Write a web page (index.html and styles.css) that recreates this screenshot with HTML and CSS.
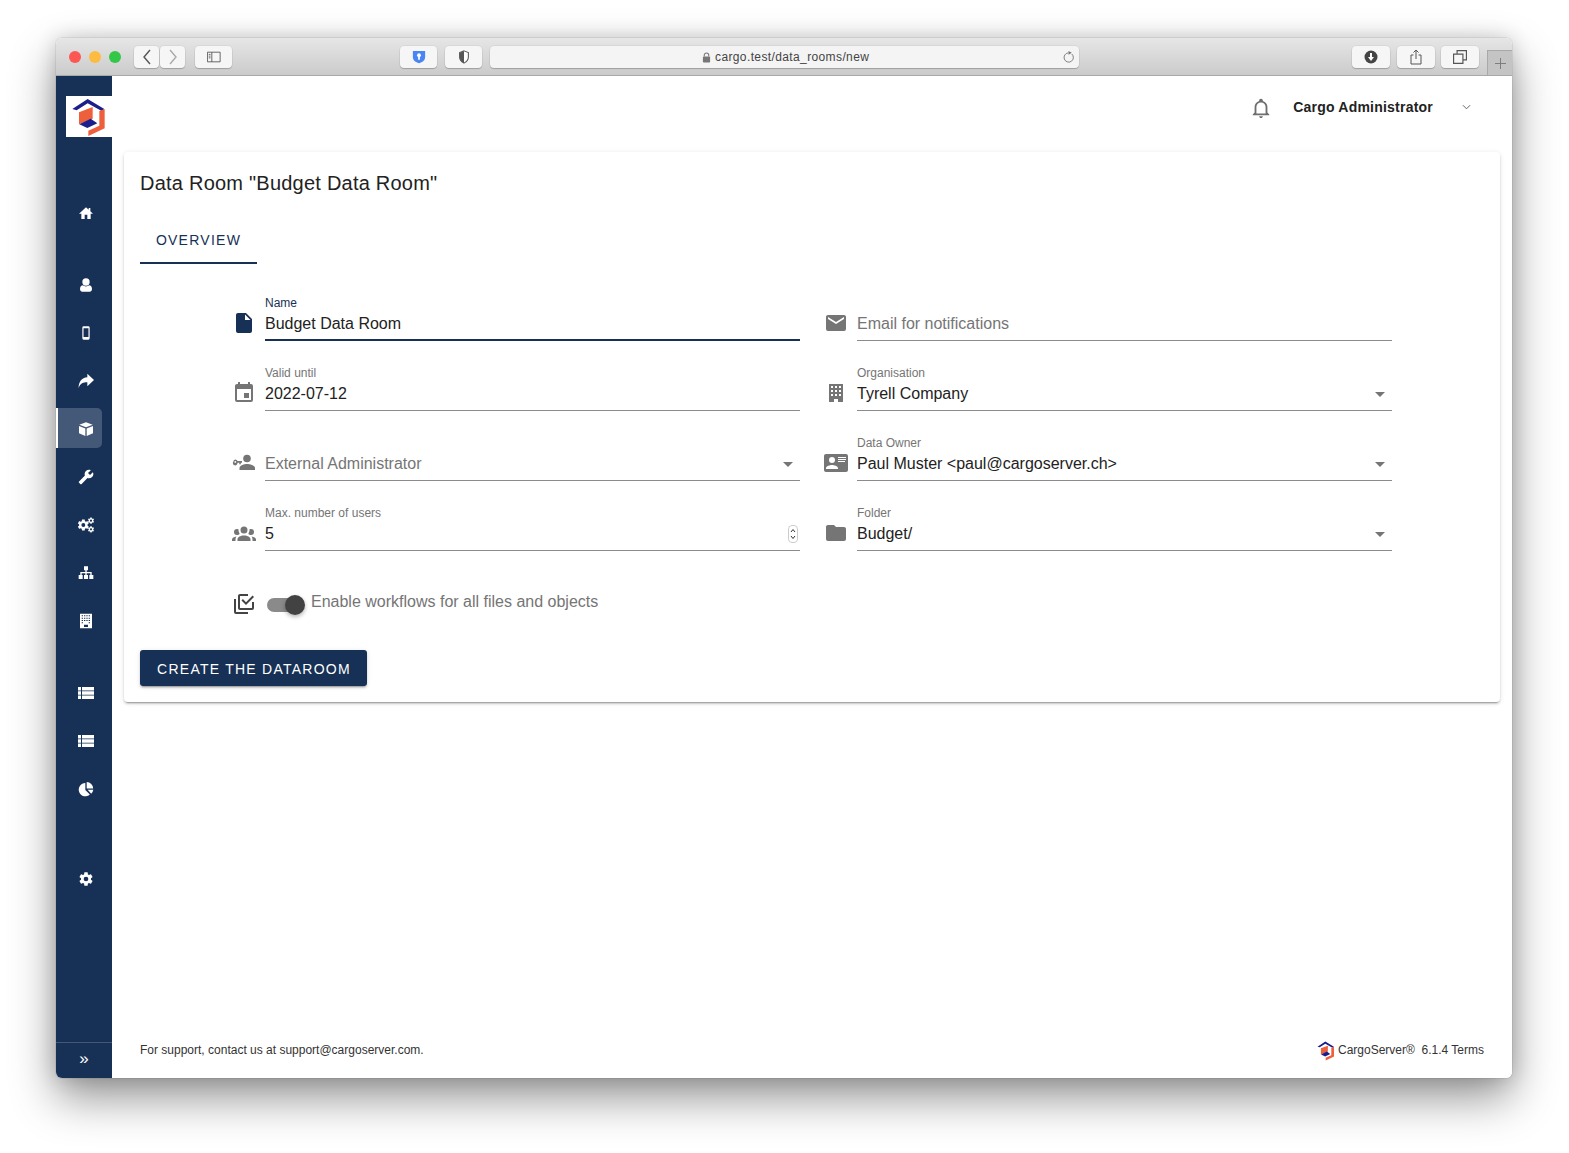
FILE: index.html
```html
<!DOCTYPE html>
<html lang="en">
<head>
<meta charset="utf-8">
<title>Data Room</title>
<link rel="stylesheet" href="styles.css">
</head>
<body>
<svg class="defs" width="0" height="0" aria-hidden="true">
  <symbol id="logo" viewBox="48 198 138 123">
    <polygon fill="#1a1f8c" points="113,207 163,237 155,243 113,220 80,241 67,237"/>
    <polygon fill="#ee5f3b" points="87,247 128,231 128,266 87,283"/>
    <polygon fill="#1a1f8c" points="88,283 122,266 142,280 112,294"/>
    <polygon fill="#ee5f3b" points="148,243 164,237 164,295 115,318 115,302 148,287"/>
  </symbol>
  <symbol id="i-cog" viewBox="0 0 24 24"><path d="M12,15.5A3.5,3.5 0 0,1 8.5,12A3.5,3.5 0 0,1 12,8.5A3.5,3.5 0 0,1 15.5,12A3.5,3.5 0 0,1 12,15.5M19.43,12.97C19.47,12.65 19.5,12.33 19.5,12C19.5,11.67 19.47,11.34 19.43,11L21.54,9.37C21.73,9.22 21.78,8.95 21.66,8.73L19.66,5.27C19.54,5.05 19.27,4.96 19.05,5.05L16.56,6.05C16.04,5.66 15.5,5.32 14.87,5.07L14.5,2.42C14.46,2.18 14.25,2 14,2H10C9.75,2 9.54,2.18 9.5,2.42L9.13,5.07C8.5,5.32 7.96,5.66 7.44,6.05L4.95,5.05C4.73,4.96 4.46,5.05 4.34,5.27L2.34,8.73C2.21,8.95 2.27,9.22 2.46,9.37L4.57,11C4.53,11.34 4.5,11.67 4.5,12C4.5,12.33 4.53,12.65 4.57,12.97L2.46,14.63C2.27,14.78 2.21,15.05 2.34,15.27L4.34,18.73C4.46,18.95 4.73,19.03 4.95,18.95L7.44,17.94C7.96,18.34 8.5,18.68 9.13,18.93L9.5,21.58C9.54,21.82 9.75,22 10,22H14C14.25,22 14.46,21.82 14.5,21.58L14.87,18.93C15.5,18.67 16.04,18.34 16.56,17.94L19.05,18.95C19.27,19.03 19.54,18.95 19.66,18.73L21.66,15.27C21.78,15.05 21.73,14.78 21.54,14.63L19.43,12.97Z"/></symbol>
  <symbol id="i-list" viewBox="0 0 16 12"><path d="M0 0h3v3.400H0zM4 0h12v3.400H4zM0 4.300h3v3.400H0zM4 4.300h12v3.400H4zM0 8.600h3V12H0zM4 8.600h12V12H4z"/></symbol>
</svg>

<div class="window">
  <header class="toolbar">
    <span class="light red"></span><span class="light amber"></span><span class="light green"></span>
    <span class="tbtn back"><svg viewBox="0 0 12 18" class="nav-ic"><path d="M9 2L3 9l6 7" fill="none" stroke="#555" stroke-width="1.4"/></svg></span>
    <span class="tbtn fwd"><svg viewBox="0 0 12 18" class="nav-ic"><path d="M3 2l6 7-6 7" fill="none" stroke="#aaa" stroke-width="1.4"/></svg></span>
    <span class="tbtn wide sidebar-btn"><svg viewBox="0 0 16 12" class="tb-ic"><path d="M.5.5h14.5v11H.5zM5.5.5v11M2 3h2M2 5h2M2 7h2" fill="none" stroke="#555"/></svg></span>
    <span class="tbtn wide bw-btn"><svg viewBox="0 0 16 16" class="tb-ic"><path d="M1 1h14v7c0 4-3 6-7 7-4-1-7-3-7-7z" fill="#4a85f6"/><circle cx="8" cy="6" r="2.2" fill="#fff"/><path d="M7 7h2v4H7z" fill="#fff"/></svg></span>
    <span class="tbtn wide gap8"><svg viewBox="0 0 16 16" class="tb-ic"><path d="M8 1l5 2v5c0 3-2 5.500-5 7-3-1.500-5-4-5-7V3z" fill="#fff" stroke="#555" stroke-width="1.200"/><path d="M8 1L3 3v5c0 3 2 5.500 5 7z" fill="#555"/></svg></span>
    <div class="urlbar">
      <svg viewBox="0 0 10 12" class="lock"><path d="M2.500 5V3.500a2.500 2.500 0 015 0V5" fill="none" stroke="#777" stroke-width="1.200"/><rect x="1" y="5" width="8" height="6.500" rx="1" fill="#777"/></svg>
      <span class="url">cargo.test/data_rooms/new</span>
      <svg viewBox="0 0 14 14" class="reload"><path d="M10.500 3.200A5 5 0 116.800 2" fill="none" stroke="#777" stroke-width="1"/><path d="M7 0l3.500 2L7 4z" fill="#777"/></svg>
    </div>
    <span class="tbtn wide dl-btn"><svg viewBox="0 0 14 14" class="tb-ic"><circle cx="7" cy="7" r="6.500" fill="#444"/><path d="M6 3h2v4h2L7 11 4 7h2z" fill="#fff"/></svg></span>
    <span class="tbtn wide gap7"><svg viewBox="0 0 12 16" class="tb-ic tall"><path d="M3.500 6H1v9h10V6H8.500M6 10V1M3.500 3.500L6 1l2.500 2.500" fill="none" stroke="#555"/></svg></span>
    <span class="tbtn wide gap6"><svg viewBox="0 0 12 12" class="tb-ic"><path d="M.5 3.500h8v8h-8zM3.500 3.500v-3h8v8h-3" fill="none" stroke="#555"/></svg></span>
    <span class="newtab"><svg viewBox="0 0 12 12" class="plus"><path d="M6 0v12M0 6h12" stroke="#777" fill="none"/></svg></span>
  </header>

  <div class="app">
    <aside class="sidenav">
      <div class="logo"><svg class="logo-svg"><use href="#logo"/></svg></div>
      <nav class="navgroup">
        <a class="navitem"><svg viewBox="0 0 24 24" class="nav"><path d="M10,21V14.500H14V21H19V13H22.500L18.500 9.300V4.500H16V7L12,3.200L1.500,13H5V21H10Z"/></svg></a>
      </nav>
      <nav class="navgroup">
        <a class="navitem"><svg viewBox="0 0 24 24" class="nav"><circle cx="12" cy="7.500" r="5.500"/><path d="M3 18c0-4 2.500-5.500 4.500-5.500 1 1 2.700 1.800 4.500 1.800s3.500-.8 4.500-1.800c2 0 4.500 1.500 4.500 5.500 0 2.500-1.500 4-3.500 4h-11C4.500 22 3 20.500 3 18z"/></svg></a>
        <a class="navitem"><svg viewBox="0 0 24 24" class="nav"><path fill-rule="evenodd" d="M8.500 2h7A2 2 0 0117.500 4v16a2 2 0 01-2 2h-7a2 2 0 01-2-2V4a2 2 0 012-2zM8.300 5v13h7.400V5z"/></svg></a>
        <a class="navitem"><svg viewBox="0 0 24 24" class="nav"><path d="M14,6.500V1L24,10.500L14,20V14C8,14 3.500,15.500 1,22.500C.5,14 5.500,7 14,6.500Z"/></svg></a>
        <a class="navitem active"><svg viewBox="0 0 24 24" class="nav"><path d="M12 2l10 3.600L12 9.500 2 5.600z"/><path d="M1.500 7.500l9.500 3.700V22.500l-9.500-4z"/><path d="M22.500 7.500L13 11.200V22.500l9.500-4z"/></svg></a>
        <a class="navitem"><svg viewBox="0 0 24 24" class="nav"><g transform="translate(24,0) scale(-1,1)"><path d="M22.700,19L13.600,9.900C14.500,7.600 14,4.900 12.100,3C10.100,1 7.100,.6 4.700,1.700L9,6L6,9L1.600,4.700C.4,7.100 .9,10.100 2.900,12.100C4.800,14 7.500,14.500 9.800,13.600L18.900,22.700C19.300,23.100 19.900,23.100 20.300,22.700L22.600,20.400C23.100,20 23.100,19.300 22.700,19Z"/></g></svg></a>
        <a class="navitem"><svg viewBox="0 0 24 24" class="nav"><svg x="-2" y="2" width="20" height="20" viewBox="0 0 24 24"><use href="#i-cog"/></svg><svg x="14" y="0" width="11" height="11" viewBox="0 0 24 24"><use href="#i-cog"/></svg><svg x="14" y="13" width="11" height="11" viewBox="0 0 24 24"><use href="#i-cog"/></svg></svg></a>
        <a class="navitem"><svg viewBox="0 0 24 24" class="nav"><path d="M9 2h6v6h-2v2.500h7.500V15H23v6h-6v-6h1.500v-2.500H13V15h2v6H9v-6h2v-2.500H5.500V15H7v6H1v-6h2.500v-4.500H11V8H9z"/></svg></a>
        <a class="navitem"><svg viewBox="0 0 24 24" class="nav"><path fill-rule="evenodd" d="M3 1h18v22H3zM5.500 3.500v1.500h2V3.500zM9 3.500v1.500h2V3.500zM12.500 3.500v1.500h2V3.500zM16 3.500v1.500h2V3.500zM5.500 7v1.500h2V7zM9 7v1.500h2V7zM12.500 7v1.500h2V7zM16 7v1.500h2V7zM5.500 10.500V12h2v-1.500zM9 10.500V12h2v-1.500zM12.500 10.500V12h2v-1.500zM16 10.500V12h2v-1.500zM5.500 14v1.500h2V14zM16 14v1.500h2V14zM9 17.500V21h6v-3.500z"/></svg></a>
      </nav>
      <nav class="navgroup">
        <a class="navitem"><svg class="nav listic"><use href="#i-list"/></svg></a>
        <a class="navitem"><svg class="nav listic"><use href="#i-list"/></svg></a>
        <a class="navitem"><svg viewBox="0 0 24 24" class="nav"><path d="M11 3a10 10 0 106.800 17.400L11 13.500z"/><path d="M13 1.500a10 10 0 019.800 9.800H13z"/><path d="M14.500 13.300h8.500a10 10 0 01-3.300 6z"/></svg></a>
      </nav>
      <nav class="navgroup settings">
        <a class="navitem"><svg class="nav"><use href="#i-cog"/></svg></a>
      </nav>
      <div class="collapse">»</div>
    </aside>

    <main class="main">
      <div class="topbar">
        <svg viewBox="0 0 24 24" class="bell"><path d="M10 21H14C14 22.100 13.100 23 12 23S10 22.100 10 21M21 19V20H3V19L5 17V11C5 7.900 7 5.200 10 4.300V4C10 2.900 10.900 2 12 2S14 2.900 14 4V4.300C17 5.200 19 7.900 19 11V17L21 19M17 11C17 8.200 14.800 6 12 6S7 8.200 7 11V18H17V11Z"/></svg>
        <span class="username">Cargo Administrator</span>
        <svg viewBox="0 0 10 6" class="caret"><path d="M1 1l4 4 4-4" fill="none" stroke="#555" stroke-width="1"/></svg>
      </div>

      <section class="card">
        <h1 class="title">Data Room "Budget Data Room"</h1>
        <div class="tabs"><span class="tab">OVERVIEW</span></div>

        <form class="form">
          <div class="cell">
            <svg viewBox="0 0 24 24" class="ficon navy"><path d="M13,9V3.500L18.500,9M6,2C4.890,2 4,2.890 4,4V20A2,2 0 0,0 6,22H18A2,2 0 0,0 20,20V8L14,2H6Z"/></svg>
            <div class="field focused"><label class="lbl">Name</label><div class="val"><span>Budget Data Room</span></div></div>
          </div>
          <div class="cell">
            <svg viewBox="0 0 24 24" class="ficon"><path d="M20,8L12,13L4,8V6L12,11L20,6M20,4H4C2.890,4 2,4.890 2,6V18A2,2 0 0,0 4,20H20A2,2 0 0,0 22,18V6C22,4.890 21.100,4 20,4Z"/></svg>
            <div class="field"><label class="lbl"></label><div class="val ph"><span>Email for notifications</span></div></div>
          </div>
          <div class="cell">
            <svg viewBox="0 0 24 24" class="ficon"><path d="M19 3h-1V1h-2v2H8V1H6v2H5c-1.110 0-2 .9-2 2v14a2 2 0 002 2h14a2 2 0 002-2V5a2 2 0 00-2-2zm0 16H5V8h14v11zM12 12h5v5h-5z"/></svg>
            <div class="field"><label class="lbl">Valid until</label><div class="val"><span>2022-07-12</span></div></div>
          </div>
          <div class="cell">
            <svg viewBox="0 0 24 24" class="ficon"><path fill-rule="evenodd" d="M5 3h14v18h-5v-3h-4v3H5zM7 5v2h2V5zM11 5v2h2V5zM15 5v2h2V5zM7 9v2h2V9zM11 9v2h2V9zM15 9v2h2V9zM7 13v2h2v-2zM11 13v2h2v-2zM15 13v2h2v-2z"/></svg>
            <div class="field"><label class="lbl">Organisation</label><div class="val"><span>Tyrell Company</span><i class="arrow"></i></div></div>
          </div>
          <div class="cell">
            <svg viewBox="0 0 24 24" class="ficon"><circle cx="15" cy="7.500" r="3.800"/><path d="M7.500 19v-2c0-2.600 5-4 7.500-4s8 1.400 8 4v2z"/><path fill-rule="evenodd" d="M3.300 8.500a2.300 2.300 0 012.200 1.500H10v1.800H8.800v1.500H7.300v-1.500H5.500A2.300 2.300 0 111.300 10.800a2.300 2.300 0 012-2.300zm0 1.500a.9.9 0 100 1.800.9.9 0 000-1.800z"/></svg>
            <div class="field"><label class="lbl"></label><div class="val ph"><span>External Administrator</span><i class="arrow"></i></div></div>
          </div>
          <div class="cell">
            <svg viewBox="0 0 24 24" class="ficon"><path d="M2,3H22C23.050,3 24,3.950 24,5V19C24,20.050 23.050,21 22,21H2C.95,21 0,20.050 0,19V5C0,3.950 .95,3 2,3M14,6V7H22V6H14M14,8V9H21.500L22,9V8H14M14,10V11H21V10H14M8,13.910C6,13.910 2,15 2,17V18H14V17C14,15 10,13.910 8,13.910M8,6A3,3 0 0,0 5,9A3,3 0 0,0 8,12A3,3 0 0,0 11,9A3,3 0 0,0 8,6Z"/></svg>
            <div class="field"><label class="lbl">Data Owner</label><div class="val"><span>Paul Muster &lt;paul@cargoserver.ch&gt;</span><i class="arrow"></i></div></div>
          </div>
          <div class="cell">
            <svg viewBox="0 0 24 24" class="ficon"><path d="M12,5.500A3.500,3.500 0 0,1 15.500,9A3.500,3.500 0 0,1 12,12.500A3.500,3.500 0 0,1 8.500,9A3.500,3.500 0 0,1 12,5.500M5,8C5.560,8 6.080,8.150 6.530,8.420C6.380,9.850 6.800,11.270 7.660,12.380C7.160,13.340 6.160,14 5,14A3,3 0 0,1 2,11A3,3 0 0,1 5,8M19,8A3,3 0 0,1 22,11A3,3 0 0,1 19,14C17.840,14 16.840,13.340 16.340,12.380C17.200,11.270 17.620,9.850 17.470,8.420C17.920,8.150 18.440,8 19,8M5.500,18.250C5.500,16.180 8.410,14.500 12,14.500C15.590,14.500 18.500,16.180 18.500,18.250V20H5.500V18.250M0,20V18.500C0,17.110 1.890,15.940 4.450,15.600C3.860,16.280 3.500,17.220 3.500,18.250V20H0M24,20H20.500V18.250C20.500,17.220 20.140,16.280 19.550,15.600C22.110,15.940 24,17.110 24,18.500V20Z"/></svg>
            <div class="field"><label class="lbl">Max. number of users</label><div class="val"><span>5</span><svg viewBox="0 0 10 18" class="spin"><rect x=".5" y=".5" width="9" height="17" rx="3.500" fill="#fff" stroke="#ccc"/><path d="M3 7l2-2.500L7 7M3 11l2 2.500L7 11" fill="none" stroke="#333"/></svg></div></div>
          </div>
          <div class="cell">
            <svg viewBox="0 0 24 24" class="ficon"><path d="M10,4H4C2.890,4 2,4.890 2,6V18A2,2 0 0,0 4,20H20A2,2 0 0,0 22,18V8C22,6.890 21.100,6 20,6H12L10,4Z"/></svg>
            <div class="field"><label class="lbl">Folder</label><div class="val"><span>Budget/</span><i class="arrow"></i></div></div>
          </div>
        </form>

        <div class="toggle-row">
          <svg viewBox="0 0 24 24" class="ficon dark"><path d="M20,16V10H22V16A2,2 0 0,1 20,18H8C6.890,18 6,17.100 6,16V4C6,2.890 6.890,2 8,2H16V4H8V16H20M10.910,7.080L14,10.170L20.590,3.580L22,5L14,13L9.500,8.500L10.910,7.080M16,20V22H4A2,2 0 0,1 2,20V7H4V20H16Z"/></svg>
          <span class="switch"><span class="thumb"></span></span>
          <span class="toggle-label">Enable workflows for all files and objects</span>
        </div>

        <button type="button" class="primary">CREATE THE DATAROOM</button>
      </section>

      <footer class="footer">
        <span>For support, contact us at support@cargoserver.com.</span>
        <span class="brand"><svg class="mini"><use href="#logo"/></svg>CargoServer®&nbsp; 6.1.4 Terms</span>
      </footer>
    </main>
  </div>
</div>
</body>
</html>
```
FILE: styles.css
```css
* { box-sizing: border-box; }
html, body { margin: 0; height: 100%; background: #fff; overflow: hidden; }
body { font-family: "Liberation Sans", Arial, sans-serif; color: #222; padding-top: 38px; }
.defs { position: absolute; }

.window {
  margin: 0 57px 0 56px; height: 1040px; display: flex; flex-direction: column;
  border-radius: 6px; overflow: hidden;
  box-shadow: 0 0 0 1px rgba(0,0,0,.06), 0 20px 45px rgba(0,0,0,.42), 0 0 20px rgba(0,0,0,.16);
}

.toolbar {
  height: 38px; flex: none; display: flex; align-items: flex-start; padding: 8px 0 0 13px;
  background: linear-gradient(#e6e6e6, #cbcbcb); border-bottom: 1px solid #a9a9a9;
}
.light { width: 12px; height: 12px; border-radius: 50%; margin: 5px 8px 0 0; }
.red { background: #fc5753; }
.amber { background: #fdbc40; }
.green { background: #33c748; margin-right: 0; }
.tbtn {
  height: 22px; background: #f6f6f6; border-radius: 4px; display: flex; align-items: center; justify-content: center;
  box-shadow: 0 1px 1px rgba(0,0,0,.2), 0 0 0 .5px rgba(0,0,0,.08);
}
.back { width: 25px; margin-left: 13px; }
.fwd { width: 25px; margin-left: 1px; }
.wide { width: 37px; }
.sidebar-btn { margin-left: 10px; }
.bw-btn { margin-left: 168px; }
.gap8 { margin-left: 8px; }
.dl-btn { margin-left: 273px; width: 38px; }
.gap7 { margin-left: 7px; width: 38px; }
.gap6 { margin-left: 6px; width: 38px; }
.nav-ic { width: 12px; height: 18px; }
.tb-ic { width: 14px; height: 14px; }
.tall { height: 16px; }
.urlbar {
  width: 589px; height: 22px; margin-left: 8px; background: #f4f4f4; border-radius: 4px;
  box-shadow: 0 1px 1px rgba(0,0,0,.2), 0 0 0 .5px rgba(0,0,0,.08);
  display: flex; align-items: center; padding-left: 212px; font-size: 12px; color: #444;
}
.lock { width: 9px; height: 11px; margin-right: 4px; }
.url { letter-spacing: .38px; }
.reload { width: 13px; height: 13px; margin-left: auto; margin-right: 4px; }
.newtab {
  width: 25px; height: 25px; margin: 4px 0 0 8px; background: #c4c4c4;
  border-left: 1px solid #a9a9a9; border-top: 1px solid #a9a9a9;
  display: flex; align-items: center; justify-content: center;
}
.plus { width: 11px; height: 11px; }

.app { flex: 1; display: flex; min-height: 0; }

.sidenav { width: 56px; flex: none; background: #163056; display: flex; flex-direction: column; padding-top: 20px; }
.logo { height: 41px; margin: 0 0 55px 10px; background: #fff; flex: none; }
.logo-svg { width: 46px; height: 41px; display: block; }
.navgroup { display: flex; flex-direction: column; gap: 8px; margin-bottom: 32px; }
.settings { margin-top: 18px; }
.navitem {
  height: 40px; width: 46px; display: flex; align-items: center; padding: 2px 0 0 20px;
  border-left: 2px solid transparent; border-radius: 0 5px 5px 0;
}
.navitem.active { background: rgba(255,255,255,.2); border-left-color: #fff; }
.nav { width: 16px; height: 16px; fill: #fff; display: block; overflow: visible; }
.listic { height: 12px; }
.collapse {
  margin-top: auto; height: 36px; border-top: 1px solid rgba(255,255,255,.2); color: #fff;
  font-size: 17px; line-height: 32px; text-align: center;
}

.main { flex: 1; display: flex; flex-direction: column; background: #fff; min-width: 0; }
.topbar { height: 76px; flex: none; display: flex; align-items: center; padding: 0 41px 14px 0; justify-content: flex-end; }
.bell { width: 22px; height: 22px; fill: #6e6e6e; margin: 2px 21px 0 0; }
.username { font-size: 14px; font-weight: 700; letter-spacing: .22px; color: #222; margin-right: 29px; }
.caret { width: 9px; height: 6px; }

.card {
  margin: 0 12px; padding: 16px; background: #fff; border-radius: 4px;
  box-shadow: 0 3px 1px -2px rgba(0,0,0,.2), 0 2px 2px 0 rgba(0,0,0,.14), 0 1px 5px 0 rgba(0,0,0,.12);
}
.title { margin: 0; font-size: 20px; font-weight: 400; line-height: 30px; letter-spacing: .23px; color: #222; }
.tabs { margin-top: 18px; display: flex; }
.tab {
  height: 48px; width: 117px; display: flex; align-items: center; justify-content: center; padding-top: 1px;
  font-size: 14px; letter-spacing: 1.25px; color: #163056; border-bottom: 2px solid #163056;
}

.form { margin: 31px 108px 0 92px; display: grid; grid-template-columns: 568px 568px; column-gap: 24px; row-gap: 24px; }
.cell { display: flex; gap: 9px; }
.ficon { width: 24px; height: 24px; flex: none; fill: #757575; margin-top: 16px; }
.ficon.navy { fill: #163056; }
.ficon.dark { fill: #444; margin-top: 0; }
.field { flex: 1; border-bottom: 1px solid #8c8c8c; padding-bottom: 5px; }
.field.focused { border-bottom: 2px solid #163056; padding-bottom: 4px; }
.lbl { display: block; height: 16px; font-size: 12px; line-height: 16px; color: #757575; }
.focused .lbl { color: #163056; }
.val { height: 24px; display: flex; align-items: center; font-size: 16px; color: #222; padding-right: 7px; justify-content: space-between; }
.val span { padding-top: 2px; }
.val.ph { color: #757575; }
.arrow { width: 0; height: 0; border-left: 5px solid transparent; border-right: 5px solid transparent; border-top: 5px solid #757575; margin-top: 2px; }
.spin { width: 10px; height: 18px; margin: 2px -5px 0 0; }

.toggle-row { margin: 41px 0 0 92px; height: 24px; display: flex; align-items: flex-start; }
.switch { width: 34px; height: 14px; margin: 6px 0 0 11px; background: #8a8a8a; border-radius: 7px; position: relative; flex: none; }
.thumb { position: absolute; left: 18px; top: -3px; width: 20px; height: 20px; border-radius: 50%; background: #424242; box-shadow: 0 2px 4px rgba(0,0,0,.3); }
.toggle-label { font-size: 16px; color: #757575; margin: 1px 0 0 10px; line-height: 18px; }

.primary {
  margin-top: 34px; display: block; width: 227px; height: 36px; background: #163056; border: 0; border-radius: 3px; color: #fff;
  font: 14px "Liberation Sans", Arial, sans-serif; letter-spacing: 1.25px; padding: 1px 0 0 1px;
  box-shadow: 0 3px 1px -2px rgba(0,0,0,.2), 0 2px 2px 0 rgba(0,0,0,.14), 0 1px 5px 0 rgba(0,0,0,.12);
}

.footer {
  margin-top: auto; height: 58px; display: flex; justify-content: space-between; align-items: center;
  padding: 2px 28px 0; font-size: 12px; color: #333;
}
.brand { display: flex; align-items: center; }
.mini { width: 24px; height: 21px; }
```
